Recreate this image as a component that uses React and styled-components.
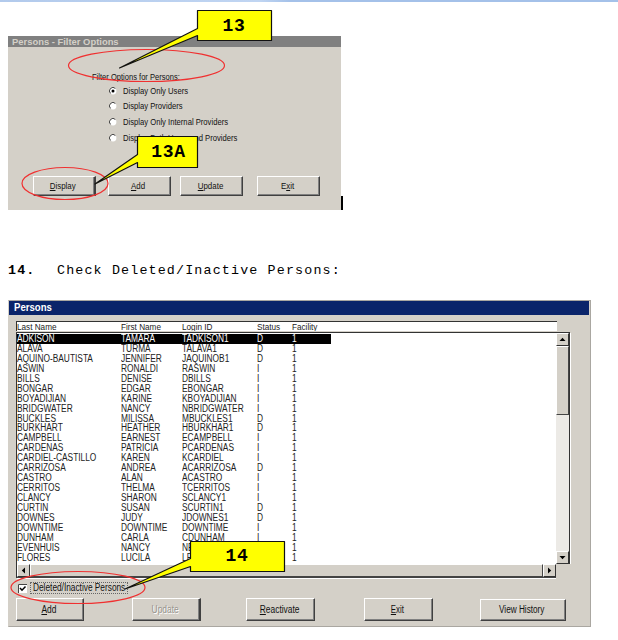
import React from "react";
import styled, { createGlobalStyle } from "styled-components";

const Global = createGlobalStyle`
  * { box-sizing: border-box; }
  body { margin: 0; background: #fff; overflow: hidden; }
`;

const Page = styled.main`
  position: relative;
  width: 618px;
  height: 640px;
  display: flex;
  flex-direction: column;
  align-items: flex-start;
  padding-left: 8px;
  background: #fff;
  font-family: "Liberation Sans", Arial, sans-serif;
  color: #111;
`;

const TopEdge = styled.div`
  align-self: stretch;
  height: 2px;
  margin: 0 0 34px -8px;
  background: linear-gradient(90deg, #b2caec 0%, #c0d5f2 42%, #a4c1e9 47%, #a4c1e9 100%);
`;

const Text = styled.span`
  display: inline-block;
  white-space: pre;
  font-size: ${(p) => p.$size || 10}px;
  line-height: ${(p) => p.$line || 10}px;
  transform: scaleX(${(p) => p.$fit || 0.85});
  transform-origin: ${(p) => p.$origin || "left"} center;
`;

const Key = styled.span`
  text-decoration: underline;
  text-underline-offset: 1px;
  text-decoration-thickness: 1px;
`;

const FilterRow = styled.section`
  display: flex;
  align-items: flex-end;
  height: 174px;
`;

const FilterWindow = styled.div`
  width: 333px;
  height: 174px;
  background: #d4d0c8;
`;

const Cursor = styled.div`
  width: 2px;
  height: 14px;
  background: #000;
`;

const TitleBar = styled.header`
  display: flex;
  align-items: center;
  height: ${(p) => (p.$active ? 14 : 11)}px;
  padding-left: ${(p) => (p.$active ? 5 : 4)}px;
  background: ${(p) => (p.$active ? "#0a246a" : "#808080")};
  color: ${(p) => (p.$active ? "#fff" : "#d4d0c8")};
  font-weight: bold;
`;

const FilterTitle = styled.div`
  padding: 25px 0 0 84px;
  height: 36px;
  line-height: 10px;
  display: flex;
`;

const RadioList = styled.div`
  display: flex;
  flex-direction: column;
  padding: 0 0 0 101px;
`;

const RadioRow = styled.label`
  display: flex;
  align-items: center;
  gap: 6px;
  height: 15.6px;
`;

const FilterButtons = styled.div`
  display: flex;
  padding: 31px 0 0 25px;
`;

const Button = styled.button`
  display: flex;
  align-items: center;
  justify-content: center;
  flex: none;
  width: ${(p) => p.$w}px;
  height: ${(p) => p.$h}px;
  margin: ${(p) => p.$top || 0}px ${(p) => p.$gap || 0}px 0 0;
  padding: 0 2px 0 0;
  border: 1px solid;
  border-color: #fff #404040 #404040 #fff;
  border-right-width: ${(p) => (p.$heavy ? 2 : 1)}px;
  box-shadow: inset -1px -1px 0 #808080;
  background: #d4d0c8;
  color: ${(p) => (p.$disabled ? "#98958f" : "#111")};
  text-shadow: ${(p) => (p.$disabled ? "1px 1px 0 #fff" : "none")};
  font-family: inherit;
`;

const Step = styled.p`
  margin: 54px 0 0;
  height: 14px;
  display: flex;
  gap: 21.5px;
  font: 13.35px/14px "Liberation Mono", "Courier New", monospace;
  letter-spacing: 1.15px;
  white-space: pre;
  color: #000;
`;

const PersonsWindow = styled.section`
  width: 583px;
  height: 327px;
  margin-top: 22px;
  background: #d4d0c8;
  border: 1px solid #aaa7a1;
  border-left-color: #d4d0c8;
  padding-right: 1px;
`;

const ColumnHead = styled.div`
  display: flex;
  width: 541px;
  height: 10px;
  margin: 6px 0 0 7px;
  overflow: hidden;
  border-top: 1px solid #333;
  border-left: 1px solid #333;
  background: #fff;
`;

const Row = styled.div`
  display: grid;
  grid-template-columns: 104px 61px 75px 35px 39px;
  width: 314px;
  height: ${(p) => (p.$head ? 9 : 9.95)}px;
  align-items: center;
  background: ${(p) => (p.$selected ? "#000" : "transparent")};
  color: ${(p) => (p.$selected ? "#fff" : "#222")};
`;

const Cell = styled.span`
  display: flex;
  width: 0;
`;

const ListFrame = styled.div`
  display: grid;
  grid-template-columns: 539px 14px;
  grid-template-rows: 231px 14px;
  width: 554px;
  height: 246px;
  margin: 1px 0 0 7px;
  border-top: 1px solid #333;
  border-left: 1px solid #333;
`;

const Rows = styled.div`
  background: #fff;
  padding-top: 1px;
  overflow: hidden;
`;

const VScroll = styled.div`
  display: flex;
  flex-direction: column;
  background: #eceae6;
  border-right: 1px solid #333;
  box-shadow: 1px 0 0 #fff;
`;

const Track = styled.div`
  flex: 1;
`;

const HScroll = styled.div`
  display: flex;
  height: 14px;
  border-bottom: 1px solid #444;
  box-shadow: 0 1px 0 #fff;
  background: #d4d0c8;
`;

const Arrow = styled.div`
  display: flex;
  align-items: center;
  justify-content: center;
  width: 13px;
  height: 13px;
  flex: none;
  background: #d4d0c8;
  border: 1px solid;
  border-color: #fff #333 #333 #fff;
`;

const Thumb = styled.div`
  flex: ${(p) => (p.$fill ? "1" : "none")};
  height: ${(p) => (p.$fill ? "auto" : "69px")};
  border: 1px solid;
  border-color: #fff #444 #444 #fff;
  background: #d4d0c8;
`;

const CheckRow = styled.label`
  display: flex;
  align-items: center;
  height: 14px;
  margin: 3px 0 0 9px;
`;

const CheckText = styled.span`
  width: 98px;
  height: 12px;
  margin-left: 3px;
  padding-left: 2px;
  border: 1px dotted #666;
  line-height: 10px;
  display: flex;
`;

const PersonButtons = styled.div`
  display: flex;
  padding: 3px 0 0 7px;
`;

const Overlay = styled.svg`
  position: absolute;
  left: 0;
  top: 0;
  pointer-events: none;
`;

const Callout = styled.div`
  position: absolute;
  left: ${(p) => p.$x}px;
  top: ${(p) => p.$y}px;
  width: ${(p) => p.$w}px;
  height: ${(p) => p.$h}px;
  display: flex;
  align-items: center;
  justify-content: center;
  font: bold 18px/20px "Liberation Mono", "Courier New", monospace;
  letter-spacing: 0.7px;
  color: #000;
`;

const people = `ADKISON,TAMARA,TADKISON1,D
ALAVA,TURMA,TALAVA1,D
AQUINO-BAUTISTA,JENNIFER,JAQUINOB1,D
ASWIN,RONALDI,RASWIN,I
BILLS,DENISE,DBILLS,I
BONGAR,EDGAR,EBONGAR,I
BOYADIJIAN,KARINE,KBOYADIJIAN,I
BRIDGWATER,NANCY,NBRIDGWATER,I
BUCKLES,MILISSA,MBUCKLES1,D
BURKHART,HEATHER,HBURKHAR1,D
CAMPBELL,EARNEST,ECAMPBELL,I
CARDENAS,PATRICIA,PCARDENAS,I
CARDIEL-CASTILLO,KAREN,KCARDIEL,I
CARRIZOSA,ANDREA,ACARRIZOSA,D
CASTRO,ALAN,ACASTRO,I
CERRITOS,THELMA,TCERRITOS,I
CLANCY,SHARON,SCLANCY1,I
CURTIN,SUSAN,SCURTIN1,D
DOWNES,JUDY,JDOWNES1,D
DOWNTIME,DOWNTIME,DOWNTIME,I
DUNHAM,CARLA,CDUNHAM,I
EVENHUIS,NANCY,NEVENHUIS,I
FLORES,LUCILA,LFLORES,I`.split("\n").map((line) => [...line.split(","), "1"]);

function Radio({ checked }) {
  return (
    <svg width="8" height="8" viewBox="0 0 8 8">
      <circle cx="4" cy="4" r="3.4" fill="#fff" />
      <path d="M1.5 6.4A3.4 3.4 0 0 1 6.4 1.5" fill="none" stroke="#444" />
      {checked && <circle cx="4" cy="4" r="1.5" fill="#000" />}
    </svg>
  );
}

function Triangle({ turn }) {
  return (
    <svg width="7" height="7" viewBox="0 0 7 7">
      <path d="M.5 5L3.5 1.8L6.5 5Z" fill="#000" transform={`rotate(${turn} 3.5 3.5)`} />
    </svg>
  );
}

function PersonRow({ values, head, selected, fit }) {
  return (
    <Row $head={head} $selected={selected}>
      {values.map((value, i) => (
        <Cell key={i}><Text $fit={fit} $size={head ? 9.5 : 10} $line={head ? 9 : 10}>{value}</Text></Cell>
      ))}
    </Row>
  );
}

function PushButton({ before = "", hot = "", after = "", fit = 0.84, ...rest }) {
  return (
    <Button {...rest}>
      <Text $origin="center" $fit={fit} $size={rest.$size}>{before}<Key>{hot}</Key>{after}</Text>
    </Button>
  );
}

export default function App() {
  return (
    <Page>
      <Global />
      <TopEdge />
      <FilterRow>
        <FilterWindow>
          <TitleBar><Text $size={9.5} $fit={0.99}>Persons - Filter Options</Text></TitleBar>
          <FilterTitle><Text $size={9} $fit={0.84}>Filter Options for Persons:</Text></FilterTitle>
          <RadioList>
            {["Display Only Users", "Display Providers", "Display Only Internal Providers", "Display Both Users and Providers"].map((label, i) => (
              <RadioRow key={label}><Radio checked={i === 0} /><Text $size={9} $fit={0.85}>{label}</Text></RadioRow>
            ))}
          </RadioList>
          <FilterButtons>
            <PushButton $w={63} $h={20} $gap={12} $size={9} fit={0.88} $heavy hot="D" after="isplay" />
            <PushButton $w={63} $h={20} $gap={9} $size={9} fit={0.88} hot="A" after="dd" />
            <PushButton $w={63} $h={20} $gap={14} $size={9} fit={0.88} hot="U" after="pdate" />
            <PushButton $w={63} $h={20} $size={9} fit={0.88} before="E" hot="x" after="it" />
          </FilterButtons>
        </FilterWindow>
        <Cursor />
      </FilterRow>

      <Step><b>14.</b><span>Check Deleted/Inactive Persons:</span></Step>

      <PersonsWindow>
        <TitleBar $active><Text $size={10} $fit={0.96}>Persons</Text></TitleBar>
        <ColumnHead>
          <PersonRow head fit={0.86} values={["Last Name", "First Name", "Login ID", "Status", "Facility"]} />
        </ColumnHead>
        <ListFrame>
          <Rows>
            {people.map((p, i) => <PersonRow key={p[2]} values={p} selected={i === 0} fit={0.835} />)}
          </Rows>
          <VScroll>
            <Arrow><Triangle turn={0} /></Arrow>
            <Thumb />
            <Track />
            <Arrow><Triangle turn={180} /></Arrow>
          </VScroll>
          <HScroll>
            <Arrow><Triangle turn={-90} /></Arrow>
            <Thumb $fill />
            <Arrow><Triangle turn={90} /></Arrow>
          </HScroll>
        </ListFrame>
        <CheckRow>
          <svg width="9" height="9" viewBox="0 0 9 9">
            <path d="M0 0H9V9H0Z" fill="#fff" />
            <path d="M.5 9V.5H9" fill="none" stroke="#444" />
            <path d="M2 4L4 6.2L7.5 2.5" fill="none" stroke="#000" strokeWidth="1.5" />
          </svg>
          <CheckText><Text $fit={0.83}>Deleted/Inactive Persons</Text></CheckText>
        </CheckRow>
        <PersonButtons>
          <PushButton $w={68} $h={23} $gap={48} hot="A" after="dd" />
          <PushButton $w={69} $h={23} $gap={45} $heavy $disabled before="Update" />
          <PushButton $w={69} $h={23} $gap={49} hot="R" after="eactivate" />
          <PushButton $w={69} $h={23} $gap={47} fit={0.78} hot="E" after="xit" />
          <PushButton $w={86} $h={22} $top={1} fit={0.82} before="View History" />
        </PersonButtons>
      </PersonsWindow>

      <Overlay width="618" height="640" viewBox="0 0 618 640">
        <g fill="none" stroke="#f03030" strokeWidth="1.2">
          <ellipse cx="146.5" cy="65.5" rx="78" ry="16" />
          <ellipse cx="65" cy="183.5" rx="43" ry="16" />
          <ellipse cx="78" cy="587.5" rx="67" ry="16" />
        </g>
        <g fill="#ff0" stroke="#111" strokeWidth="1.2" strokeLinejoin="round">
          <path d="M197.5 10.5H271.5V40.5H197.5V35.5L119.5 68L197.5 28.5Z" />
          <path d="M137.5 136.5H197.5V167.5H137.5V162.5L95 184L137.5 154.5Z" />
          <path d="M190.5 541.5H284.5V571.5H190.5V566.5L125 589L190.5 558.5Z" />
        </g>
      </Overlay>
      <Callout $x={197} $y={11} $w={74} $h={30}>13</Callout>
      <Callout $x={138} $y={137} $w={61} $h={30}>13A</Callout>
      <Callout $x={190} $y={541} $w={94} $h={30}>14</Callout>
    </Page>
  );
}
